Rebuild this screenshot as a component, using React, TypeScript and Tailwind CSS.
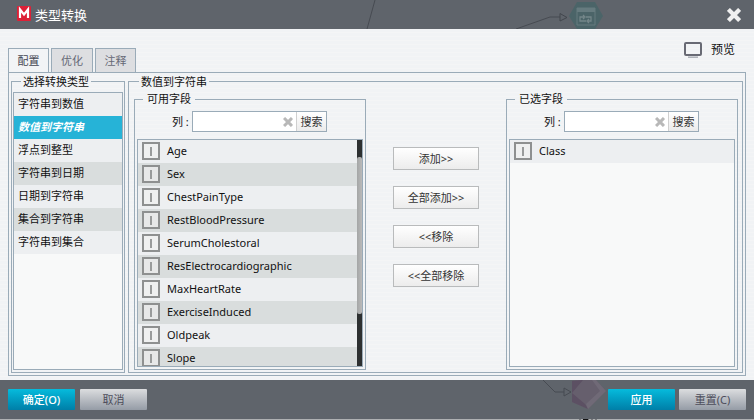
import React, { useState } from 'react';

const types = ['字符串到数值', '数值到字符串', '浮点到整型', '字符串到日期', '日期到字符串', '集合到字符串', '字符串到集合'];

const fields = [
  'Age',
  'Sex',
  'ChestPainType',
  'RestBloodPressure',
  'SerumCholestoral',
  'ResElectrocardiographic',
  'MaxHeartRate',
  'ExerciseInduced',
  'Oldpeak',
  'Slope',
];

const stripes = 'bg-[repeating-linear-gradient(to_bottom,#f1f3f5_0px,#f1f3f5_3px,#f4f5f6_3px,#f4f5f6_4px)]';

function Cross({ className }: { className: string }) {
  return (
    <svg viewBox="0 0 12 12" className={className} aria-hidden="true">
      <path d="M2.500 2.500L9.500 9.500M9.500 2.500L2.500 9.500" stroke="currentColor" strokeWidth="3.600" strokeLinecap="square" />
    </svg>
  );
}

function SearchRow({ id }: { id: string }) {
  return (
    <div className="flex h-[21px] shrink-0 items-center pl-[35px]">
      <label htmlFor={id} className="w-[20px] shrink-0 whitespace-pre">列 :</label>
      <div className="flex h-[21px] w-[135px] items-stretch border border-[#9aabb8] bg-white">
        <input id={id} type="text" className="w-0 min-w-0 flex-1 px-1 outline-none" />
        <button type="button" aria-label="清除" className="mr-[3px] flex w-[10px] items-center">
          <Cross className="h-[10px] w-[10px] text-[#b8b8b8]" />
        </button>
        <button type="button" className="w-[30px] border-l border-[#d0d0d0] bg-linear-to-b from-white to-[#ebebeb] text-center text-[#333]">
          搜索
        </button>
      </div>
    </div>
  );
}

function FieldRow({ name, odd }: { name: string; odd: boolean }) {
  return (
    <li className={'flex h-[23px] shrink-0 items-center gap-[7px] pb-px pl-1 ' + (odd ? 'bg-[#d9dddd]' : 'bg-[#edeff1]')}>
      <span className="flex h-[18px] w-[18px] items-center justify-center border-2 border-[#8e9090] bg-[#f0f0f0]/60">
        <span className="h-[9px] w-[2px] bg-[#999b9b]" />
      </span>
      <span>{name}</span>
    </li>
  );
}

function FieldBox({ title, id, items, scroll }: { title: string; id: string; items: string[]; scroll?: boolean }) {
  return (
    <fieldset className="flex w-[232px] min-w-0 shrink-0 flex-col border border-[#9aabb8] px-[2px] pb-[2px]">
      <legend className="ml-[6px] h-[16px] px-1 leading-[16px]">{title}</legend>
      <div className="flex h-full min-h-0 flex-col gap-[7px] pt-1">
        <SearchRow id={id} />
        <div className="flex min-h-0 flex-1 border border-[#9aabb8] bg-[#f8f9f9]">
          <ul className="flex min-w-0 flex-1 flex-col overflow-hidden">
            {items.map((f, i) => (
              <FieldRow key={f} name={f} odd={i % 2 === 1} />
            ))}
          </ul>
          {scroll && (
            <div className="w-[5px] bg-[#2d3031] pt-[17px]">
              <div className="h-[157px] rounded-[2px] bg-linear-to-r from-[#a4a6a6] to-[#bababa]" />
            </div>
          )}
        </div>
      </div>
    </fieldset>
  );
}

const blue = 'h-[21px] w-[67px] rounded-[1px] bg-linear-to-b from-[#06bbdc] to-[#007fa8] text-white font-medium';
const grey = 'h-[21px] w-[67px] rounded-[1px] bg-linear-to-b from-[#dcdddf] to-[#959ca6] text-[#4d4d5b]';

export default function App() {
  const [type, setType] = useState(1);
  return (
    <div className="flex h-screen flex-col overflow-hidden bg-[#5f646b] font-['Noto_Sans','Noto_Sans_CJK_SC',sans-serif] text-[11px] leading-[16px] text-[#111]">
      <header className="relative flex h-[29px] shrink-0 items-center justify-between pr-[13px] pl-[17px]">
        <svg className="absolute top-0 left-[354px] h-[29px] w-[260px]" viewBox="354 0 260 29" fill="none" aria-hidden="true">
          <path d="M375 0L367 29M516 29L550 17H560" stroke="#474b52" />
          <path d="M560 13.500V21L567 17.500Z" stroke="#42464d" />
          <path d="M577 2H595L603 16L595 29H577L569 16Z" fill="#4b6468" />
          <path d="M577 8H595V25H577Z" stroke="#667b7f" />
          <path d="M577 8H595V12H577Z" fill="#667b7f" />
          <path d="M586 21H580V17H584M583 15L585 17L583 19M586 17H591V21H587M589 19L587 21L589 23" stroke="#748689" strokeWidth="1.300" />
        </svg>
        <h1 className="relative flex items-start gap-1 text-[13px] leading-[18px] text-white">
          <svg className="h-[15px] w-[14px]" viewBox="0 0 14 15" aria-hidden="true">
            <rect width="14" height="15" rx="1" fill="#dd2037" />
            <path d="M3 12V3.500L7 8.500L11 3.500V12" fill="none" stroke="#fff" strokeWidth="2.200" />
          </svg>
          <span>类型转换</span>
        </h1>
        <button type="button" aria-label="关闭" className="relative">
          <Cross className="h-[14px] w-[14px] text-[#f0f0f0]" />
        </button>
      </header>

      <main className={'flex min-h-0 flex-1 flex-col px-2 pb-1 ' + stripes}>
        <div className="flex h-[43px] shrink-0 items-end justify-between">
          <div role="tablist" className="flex gap-[2px]">
            <button type="button" role="tab" aria-selected="true" className="h-[24px] w-[41px] border border-b-0 border-[#9aabb8] bg-[#f2f4f6] text-[#444653]">配置</button>
            <button type="button" role="tab" aria-selected="false" className="h-[24px] w-[42px] border border-b-0 border-[#9aabb8] bg-[#dddee1] text-[#666875]">优化</button>
            <button type="button" role="tab" aria-selected="false" className="h-[24px] w-[41px] border border-b-0 border-[#9aabb8] bg-[#dddee1] text-[#666875]">注释</button>
          </div>
          <button type="button" className="mb-[14px] flex items-center gap-[9px] pr-[11px] text-[12px]">
            <svg className="h-[17px] w-[18px]" viewBox="0 0 18 17" fill="none" aria-hidden="true">
              <rect x="1" y="2" width="16" height="12" rx="1" stroke="#686a74" strokeWidth="2" />
              <path d="M4 16.200H14" stroke="#aaaeb6" strokeWidth="1.500" />
            </svg>
            预览
          </button>
        </div>

        <div className="flex min-h-0 flex-1 gap-[3px] border border-[#9aabb8] p-[2px] pt-0">
          <fieldset className="flex w-[114px] min-w-0 shrink-0 flex-col border border-[#9aabb8] px-px pb-[2px]">
            <legend className="ml-[8px] h-[16px] px-[2px] leading-[18px]">选择转换类型</legend>
            <div className="flex h-full min-h-0 flex-col pt-[3px]">
              <ul className="min-h-0 flex-1 overflow-hidden border border-[#9aabb8] bg-[#f8f9f9]">
                {types.map((t, i) => (
                  <li key={t}>
                    <button
                      type="button"
                      onClick={() => setType(i)}
                      className={
                        'block h-[23px] w-full pb-px pl-1 text-left ' +
                        (i === type ? 'bg-[#26b3d7] font-bold text-white italic' : i % 2 ? 'bg-[#d9dddd]' : 'bg-[#edeff1]')
                      }
                    >
                      {t}
                    </button>
                  </li>
                ))}
              </ul>
            </div>
          </fieldset>

          <fieldset className="min-w-0 flex-1 border border-[#9aabb8] pr-[4px] pb-[2px] pl-[5px]">
            <legend className="ml-[5px] h-[16px] px-[2px] leading-[18px]">数值到字符串</legend>
            <div className="flex h-full min-h-0 justify-between pt-[2px]">
              <FieldBox title="可用字段" id="available" items={fields} scroll />
              <div className="flex flex-col gap-4 pt-[56px]">
                {['添加>>', '全部添加>>', '<<移除', '<<全部移除'].map((b) => (
                  <button key={b} type="button" className="h-[23px] w-[86px] border border-[#b9bbbc] bg-linear-to-b from-white to-[#ececec] text-[#333]">
                    {b}
                  </button>
                ))}
              </div>
              <FieldBox title="已选字段" id="selected" items={['Class']} />
            </div>
          </fieldset>
        </div>
      </main>

      <footer className="relative flex h-[40px] shrink-0 items-center justify-between border-b border-[#aeb0b2] px-2">
        <svg className="absolute top-0 right-[144px] h-[40px] w-[70px]" viewBox="540 380 70 40" fill="none" aria-hidden="true">
          <path d="M543 380L555 392H564" stroke="#474b52" />
          <path d="M564 388V396L571 392Z" stroke="#474b52" />
          <path d="M572 381L577 380H596L606 391L588 409L572 402Z" fill="#665f6d" />
          <path d="M572 381L583 380L572 393ZM572 393L585 404L588 409L572 402Z" fill="#5c5063" />
          <path d="M596 380L606 391L588 409L586 404L600 391L592 380Z" fill="#706a77" />
          <path d="M579 419.500H597" stroke="#77797c" strokeDasharray="2 2" />
          <path d="M583 419.500H588" stroke="#111" />
        </svg>
        <div className="flex gap-[5px]">
          <button type="button" className={blue}>确定(O)</button>
          <button type="button" className={grey}>取消</button>
        </div>
        <div className="relative flex gap-1">
          <button type="button" className={blue}>应用</button>
          <button type="button" className={grey}>重置(C)</button>
        </div>
      </footer>
    </div>
  );
}
